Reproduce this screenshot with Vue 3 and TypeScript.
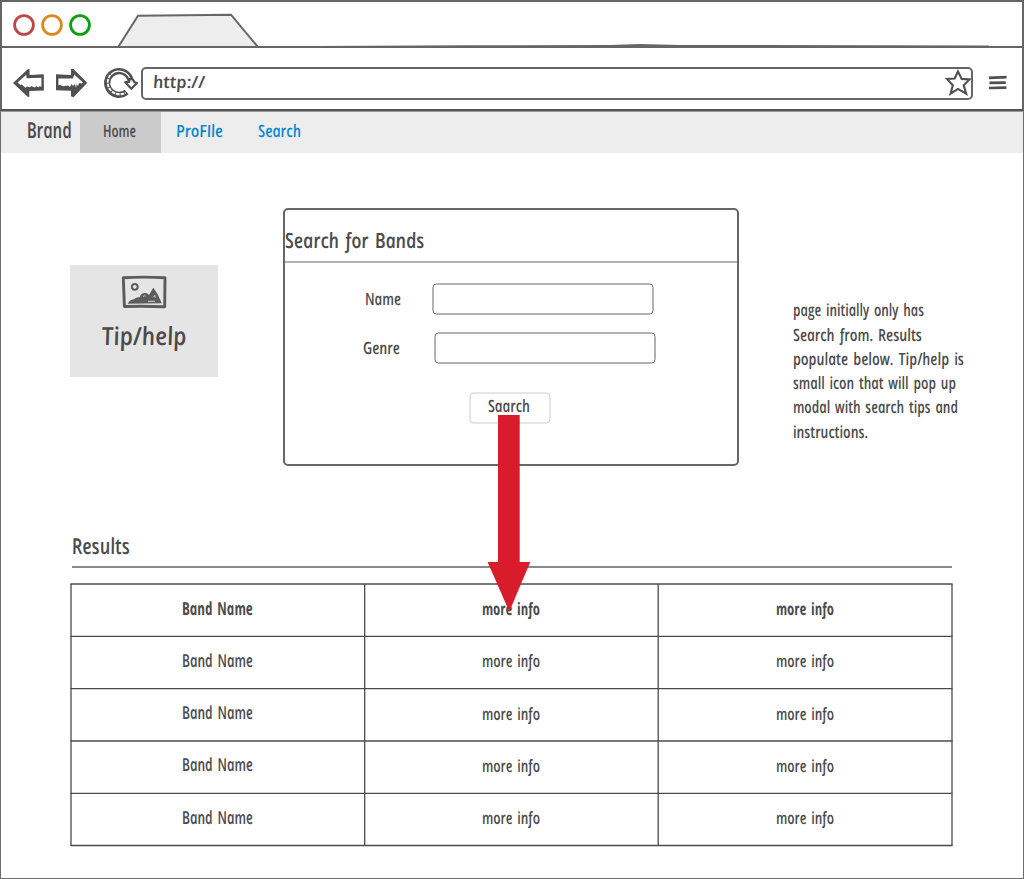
<script setup lang="ts">
import { h } from 'vue'

interface InkProps {
  text: string
  w: number
  size?: number
  weight?: number
}

/* A line of upright, narrow marker lettering that fills the width w. */
const Ink = (props: InkProps) => {
  const size = props.size ?? 17
  const base = Math.round(size * 0.8) + 1
  return h('svg', { class: 'ink', width: props.w, height: size }, [
    h(
      'text',
      {
        transform: `translate(.7 ${base}) skewX(9)`,
        'font-size': size,
        'font-weight': props.weight ?? 600,
        'word-spacing': 2,
        textLength: props.w,
        lengthAdjust: 'spacingAndGlyphs',
      },
      props.text,
    ),
  ])
}
Ink.props = ['text', 'w', 'size', 'weight']

const lights = [
  { x: 24, color: '#bc4749' },
  { x: 52, color: '#dc8a20' },
  { x: 80, color: '#08a00c' },
]

const note = [
  { text: 'page initially only has', w: 131 },
  { text: 'Search from. Results', w: 129 },
  { text: 'populate below. Tip/help is', w: 171 },
  { text: 'small icon that will pop up', w: 163 },
  { text: 'modal with search tips and', w: 165 },
  { text: 'instructions.', w: 75 },
]

const rows = Array.from({ length: 5 }, () => ['Band Name', 'more info', 'more info'])
const rowRules = [1, 53.4, 105.7, 158, 210.3, 262.5]
const colRules = [1, 294.7, 588.2, 882]
</script>

<template>
  <div class="window">
    <header class="chrome">
      <svg class="titlebar" width="1024" height="48">
        <path d="M118.5 46.5 138 15.7 231 14.7 257.5 46.5" fill="#ededed" stroke="#666" stroke-width="2" />
        <circle v-for="l in lights" :key="l.x" :cx="l.x" cy="25" r="9.4" fill="none" :stroke="l.color" stroke-width="2.8" />
        <path d="M0 46H316L470 45.3 610 45 640 44 680 45 989 45.4V46H1024V48H595L560 48H0Z" fill="#666" />
      </svg>
      <div class="toolbar">
        <svg class="nav-icons" width="141" height="62" viewBox="0 48 141 62">
          <path d="M13 83 28 69 29.6 69.5V75L43.8 74.3 43.9 90.5 29.3 91V96.8L28 97Z" fill="#505050" />
          <path d="M17.5 82.4 26.3 74.8 26.6 78.2 41.4 77.7V86.8L39.5 86.2 38.5 87.3 36.5 86.3 34.5 87.6 31.5 86 30 87.3 27 86.5 25.6 87.8 21.5 84.5 20.5 85Z" fill="#fff" />
          <path d="M56 74.2 71 75V69L73.4 69 87.2 82.8 73.5 97.2 71 96.3V90.8L56 90.3Z" fill="#505050" />
          <path d="M58.4 78.4 73 78.4 74.2 74.5 83 82.4 81.8 83.6 79.3 83 77.8 86 76.5 84 76 88 74.8 84 73 86 71.5 84 70 87 68 85.5 63 86.2 60 84.8 58.4 85.6Z" fill="#fff" />
          <path d="M130.7 81.4A11.8 11.8 0 1 0 126.6 92" fill="none" stroke="#505050" stroke-width="6.2" />
          <path d="M130.6 81A11.8 11.8 0 0 0 111 74.4" fill="none" stroke="#fff" stroke-width="1.3" />
          <path d="M110.4 75A11.8 11.8 0 0 0 125.6 92.6" fill="none" stroke="#fff" stroke-width="1.9" stroke-dasharray="3.6 1" />
          <path d="M125.2 82.2 129 82 129.6 79 132.6 79.3 134.6 82.3 137 83 131.3 88.8Z" fill="#fff" stroke="#505050" stroke-width="2.2" stroke-linejoin="round" />
        </svg>
        <div class="address">
          <Ink text="http://" :w="52" :size="17" />
          <svg class="star" width="27" height="27" viewBox="945 69.5 27 27">
            <path d="M958 72 961.7 79.4 969.5 79.9 963.7 85.8 966.2 94.2 958 89.4 950.6 94.2 952.8 85.8 947 79.4 954.6 79Z" fill="none" stroke="#505050" stroke-width="2.1" />
          </svg>
        </div>
        <svg class="menu" width="20" height="16">
          <path d="M1 3.9 18.6 3.1M1.4 8.8 17.8 8.6M1 14 18.4 13.6" stroke="#505050" stroke-width="2.7" />
        </svg>
      </div>
    </header>

    <div class="page">
      <nav class="navbar">
        <a class="brand"><Ink text="Brand" :w="45" :size="22" /></a>
        <a class="tab active"><Ink text="Home" :w="33" /></a>
        <a class="tab profile"><Ink text="ProFIle" :w="47" /></a>
        <a class="tab search"><Ink text="Search" :w="43" /></a>
      </nav>

      <section class="stage">
        <aside class="tip">
          <svg width="46" height="34" viewBox="121 275.5 46 34">
            <path d="M123.3 278.3Q144 277 165 278.3L164.7 307.2Q144 306.4 124.4 307Z" fill="none" stroke="#5c5c5c" stroke-width="2.9" stroke-linejoin="round" />
            <circle cx="134.8" cy="287.3" r="2.9" fill="none" stroke="#5c5c5c" stroke-width="2" />
            <path d="M127.7 304.3Q129.5 300 134 299.7 136 297.5 139.5 297.8 141 293.5 145 293.5 147.5 293.3 149 295.5L153.3 288.2 155.5 291.5 157.5 294.5 161.8 303.8Z" fill="#5c5c5c" />
            <path d="M143 297.2q1-1.8 2.4-.6M153.5 297.6l1.3-1.8.3 2.2M148 301.8h7" fill="none" stroke="#e5e5e5" stroke-width=".9" />
          </svg>
          <Ink class="tip-label" text="Tip/help" :w="85" :size="25" />
        </aside>

        <form class="panel" @submit.prevent>
          <h2 class="panel-title"><Ink text="Search for Bands" :w="139.5" :size="21" /></h2>
          <svg class="divider" width="452" height="2"><path d="M0 1H452" stroke="#666" /></svg>
          <div class="field name">
            <Ink text="Name" :w="36" />
            <svg width="222" height="32"><rect x="1" y="1" width="220" height="30" rx="3.5" fill="#fff" stroke="#666" /></svg>
          </div>
          <div class="field genre">
            <Ink text="Genre" :w="37" />
            <svg width="222" height="32"><rect x="1" y="1" width="220" height="30" rx="3.5" fill="#fff" stroke="#666" /></svg>
          </div>
          <div class="submit">
            <svg class="submit-box" width="82" height="32"><rect x="1" y="1" width="80" height="30" rx="3.5" fill="#fff" stroke="#ccc" /></svg>
            <Ink text="Saarch" :w="42" />
          </div>
        </form>

        <div class="note">
          <div v-for="line in note" :key="line.text" class="note-line">
            <Ink :text="line.text" :w="line.w" :size="17" />
          </div>
        </div>
      </section>

      <section class="results">
        <h2 class="results-title"><Ink text="Results" :w="58" :size="22" /></h2>
        <div class="table">
          <svg class="rules" width="884" height="264">
            <path v-for="y in rowRules" :key="'r' + y" :d="`M.4 ${y}H882.6`" stroke="#4b4b4b" stroke-width="1.3" />
            <path v-for="x in colRules" :key="'c' + x" :d="`M${x} 1V262.5`" stroke="#4b4b4b" stroke-width="1.3" />
          </svg>
          <template v-for="(row, r) in rows" :key="r">
            <div v-for="(cell, c) in row" :key="c" class="cell">
              <Ink :text="cell" :w="c === 0 ? 71 : 58" :size="c === 0 ? 18 : 17" :weight="r === 0 ? 700 : 600" />
            </div>
          </template>
        </div>
      </section>
    </div>

    <svg class="flow-arrow" width="44" height="197" viewBox="487 415 44 197">
      <path d="M498 415H519.7V562H530.3L509.3 611.5 487.6 562H498Z" fill="#d91c2b" />
    </svg>
  </div>
</template>

<style>
body {
  background: #fff;
}
</style>

<style scoped>
.window {
  position: relative;
  width: 1024px;
  height: 879px;
  overflow: hidden;
  color: #4b4b4b;
  font-family: 'Open Sans', 'Noto Sans', sans-serif;
  font-style: italic;
}
svg {
  display: block;
  flex: none;
}
.ink {
  overflow: visible;
  fill: currentColor;
}
h2 {
  margin: 0;
}
.chrome {
  box-sizing: border-box;
  height: 111px;
  border: 2px solid #666;
  border-bottom-color: #555;
}
.titlebar {
  margin: -2px 0 0 -2px;
}
.toolbar {
  display: flex;
  align-items: flex-start;
  margin-left: -2px;
}
.address {
  box-sizing: border-box;
  display: flex;
  justify-content: space-between;
  width: 832px;
  height: 33px;
  margin-top: 19px;
  padding: 4px 0 0 10px;
  border: 2px solid #666;
  border-radius: 5px;
}
.star {
  margin-top: -4px;
  margin-right: -1px;
}
.menu {
  margin: 26px 0 0 15px;
}
.page {
  box-sizing: border-box;
  height: 768px;
  border: 1px solid #6e6e6e;
  border-top-color: #999;
}
.navbar {
  display: flex;
  align-items: flex-start;
  height: 41.4px;
  background: #ededed;
}
.brand {
  box-sizing: border-box;
  width: 78.6px;
  padding: 7px 0 0 26px;
}
.tab {
  box-sizing: border-box;
  height: 100%;
  padding-top: 9.6px;
  color: #0588cd;
}
.active {
  width: 81px;
  padding-left: 23.4px;
  background: #cbcbcb;
  color: #4b4b4b;
}
.profile {
  width: 82px;
  padding-left: 15.4px;
}
.search {
  padding-left: 15px;
}
.stage {
  display: flex;
  align-items: flex-start;
  height: 382px;
}
.tip {
  display: flex;
  flex-direction: column;
  align-items: center;
  width: 148px;
  height: 112.5px;
  margin: 111.6px 65px 0 69px;
  background: #e5e5e5;
}
.tip svg:first-child {
  margin-top: 10.5px;
}
.tip-label {
  margin-top: 15px;
}
.panel {
  box-sizing: border-box;
  width: 456px;
  height: 258px;
  margin-top: 54.6px;
  border: 2px solid #666;
  border-radius: 5px;
}
.panel-title {
  box-sizing: border-box;
  height: 51px;
  padding-top: 20.4px;
}
.field {
  display: flex;
  align-items: center;
}
.name {
  margin: 20px 0 0 80px;
  gap: 31px;
}
.genre {
  margin: 17px 0 0 78px;
  gap: 34px;
}
.submit {
  display: grid;
  place-items: center;
  width: 82px;
  height: 32px;
  margin: 28px 0 0 184px;
}
.submit > * {
  grid-area: 1 / 1;
}
.submit > .ink {
  margin: 0 2px 5px 0;
}
.note {
  margin: 148px 0 0 54px;
}
.note-line {
  height: 24.25px;
}
.results {
  width: 882px;
  margin-left: 69px;
}
.results-title {
  box-sizing: border-box;
  width: 880px;
  height: 33px;
  margin-left: 2px;
  border-bottom: 2px solid #8a8a8a;
}
.table {
  position: relative;
  display: grid;
  grid-template-columns: 293.7px 293.5px 293.8px;
  grid-auto-rows: 52.3px;
  margin-top: 15px;
  padding: 1px;
}
.rules {
  position: absolute;
  top: 0;
  left: 0;
}
.cell {
  display: flex;
  align-items: center;
  justify-content: center;
  padding-bottom: 4px;
}
.flow-arrow {
  position: absolute;
  top: 415px;
  left: 487px;
}
</style>
